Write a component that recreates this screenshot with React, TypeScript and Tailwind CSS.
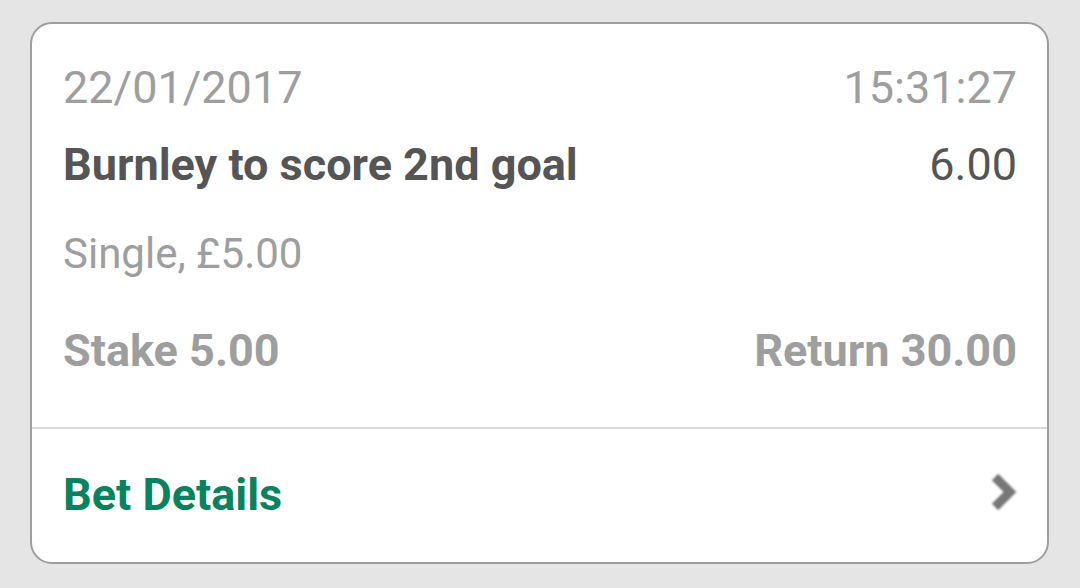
import React from 'react';

const BetCard = () => {
  return (
    <div className="w-[1019px] h-[542px] rounded-[22px] border-2 border-[#9e9e9e] bg-white flex flex-col overflow-hidden">
      {/* Summary */}
      <div className="pl-[31px] pr-[30px] pt-[38px] text-[45px] leading-[52px]">
        <div className="flex justify-between text-[#9e9e9e]">
          <span>22/01/2017</span>
          <span>15:31:27</span>
        </div>
        <div className="flex justify-between text-[#555555] mt-[25px]">
          <span className="font-bold">Burnley to score 2nd goal</span>
          <span>6.00</span>
        </div>
        <div className="text-[#9e9e9e] text-[42px] mt-[37px]">Single, £5.00</div>
        <div className="flex justify-between text-[#9e9e9e] font-bold mt-[45px]">
          <span>Stake 5.00</span>
          <span>Return 30.00</span>
        </div>
      </div>

      <div className="h-[2px] bg-[#dadada] mt-[50px]" />

      {/* Footer link */}
      <div className="flex items-center justify-between pl-[31px] pr-[30px] pt-[40px] text-[45px] leading-[52px]">
        <span className="font-bold text-[#07845e]">Bet Details</span>
        <svg width="30" height="42" viewBox="0 0 30 42" className="-mr-[1px] -mt-[6px] blur-[1px]">
          <polyline points="7,6 22,21 7,36" fill="none" stroke="#777777" strokeWidth="9" />
        </svg>
      </div>
    </div>
  );
};

const App = () => {
  return (
    <div className="w-[1080px] h-[588px] bg-[#e5e5e5] pt-[22px] pl-[30px]" style={{ fontFamily: 'Roboto, sans-serif' }}>
      <BetCard />
    </div>
  );
};

export default App;
